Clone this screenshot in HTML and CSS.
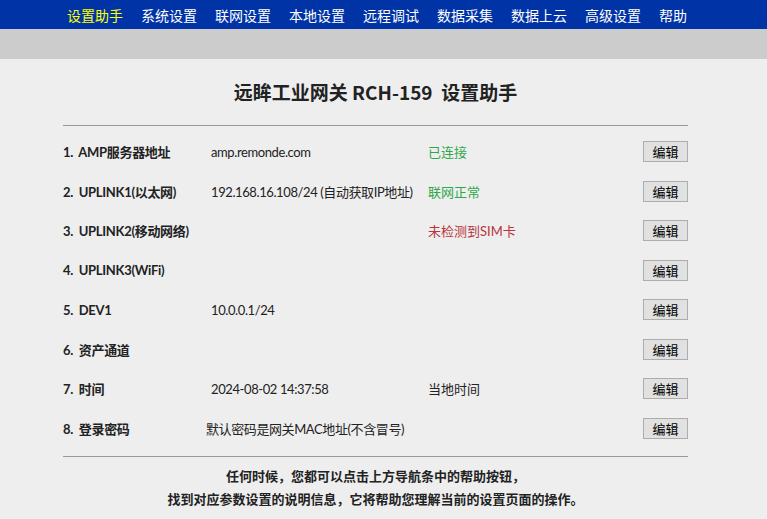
FILE: index.html
```html
<!DOCTYPE html>
<html lang="zh-CN">
<head>
    <meta charset="UTF-8">
    <title>设置助手</title>
    <link rel="stylesheet" href="styles.css">
</head>
<body>
    <div class="nav">
        <a class="nav-item active">设置助手</a>
        <a class="nav-item">系统设置</a>
        <a class="nav-item">联网设置</a>
        <a class="nav-item">本地设置</a>
        <a class="nav-item">远程调试</a>
        <a class="nav-item">数据采集</a>
        <a class="nav-item">数据上云</a>
        <a class="nav-item">高级设置</a>
        <a class="nav-item">帮助</a>
    </div>
    <div class="sub-bar"></div>

    <div class="content">
        <h1 class="title">远眸工业网关 RCH-159&nbsp; 设置助手</h1>
        <hr class="line">
        <table class="wizard-table">
            <tr>
                <td class="col-name">1.&nbsp; AMP服务器地址</td>
                <td class="col-value">amp.remonde.com</td>
                <td class="col-state ok">已连接</td>
                <td class="col-btn"><button class="button-edit">编辑</button></td>
            </tr>
            <tr>
                <td class="col-name">2.&nbsp; UPLINK1(以太网)</td>
                <td class="col-value">192.168.16.108/24 (自动获取IP地址)</td>
                <td class="col-state ok">联网正常</td>
                <td class="col-btn"><button class="button-edit">编辑</button></td>
            </tr>
            <tr>
                <td class="col-name">3.&nbsp; UPLINK2(移动网络)</td>
                <td class="col-value"></td>
                <td class="col-state err">未检测到SIM卡</td>
                <td class="col-btn"><button class="button-edit">编辑</button></td>
            </tr>
            <tr>
                <td class="col-name">4.&nbsp; UPLINK3(WiFi)</td>
                <td class="col-value"></td>
                <td class="col-state"></td>
                <td class="col-btn"><button class="button-edit">编辑</button></td>
            </tr>
            <tr>
                <td class="col-name">5.&nbsp; DEV1</td>
                <td class="col-value">10.0.0.1/24</td>
                <td class="col-state"></td>
                <td class="col-btn"><button class="button-edit">编辑</button></td>
            </tr>
            <tr>
                <td class="col-name">6.&nbsp; 资产通道</td>
                <td class="col-value"></td>
                <td class="col-state"></td>
                <td class="col-btn"><button class="button-edit">编辑</button></td>
            </tr>
            <tr>
                <td class="col-name">7.&nbsp; 时间</td>
                <td class="col-value">2024-08-02 14:37:58</td>
                <td class="col-state">当地时间</td>
                <td class="col-btn"><button class="button-edit">编辑</button></td>
            </tr>
            <tr>
                <td class="col-name">8.&nbsp; 登录密码</td>
                <td class="col-value shift" colspan="2">默认密码是网关MAC地址(不含冒号)</td>
                <td class="col-btn"><button class="button-edit">编辑</button></td>
            </tr>
        </table>
        <hr class="line">
        <div class="tips">
            <p>任何时候，您都可以点击上方导航条中的帮助按钮，</p>
            <p>找到对应参数设置的说明信息，它将帮助您理解当前的设置页面的操作。</p>
        </div>
    </div>
</body>
</html>
```

FILE: styles.css
```css
body {
    margin: 0;
    background-color: #eeeeee;
    font-family: "Noto Sans CJK SC", sans-serif;
    font-size: 13px;
    color: #222222;
}

.nav {
    height: 29px;
    background-color: #0033a6;
    display: flex;
    align-items: center;
    padding-left: 58px;
}
.nav-item {
    color: #ffffff;
    font-size: 14px;
    padding: 0 9px;
    white-space: nowrap;
    cursor: pointer;
}
.nav-item.active {
    color: #ffff00;
}
.sub-bar {
    height: 30px;
    background-color: #cccccc;
}

.content {
    width: 625px;
    margin-left: 63px;
}
.title {
    margin: 0;
    padding-top: 19px;
    height: 47px;
    line-height: 27px;
    text-align: center;
    font-size: 19px;
    font-weight: bold;
    color: #222222;
}
.line {
    margin: 0;
    border: none;
    border-top: 1px solid #999999;
}

.wizard-table {
    width: 100%;
    border-collapse: collapse;
    margin: 6px 0 8px 0;
    font-family: Lato, "Noto Sans CJK SC", sans-serif;
}
.wizard-table td {
    height: 39.5px;
    padding: 0;
    white-space: nowrap;
}
.col-name {
    width: 148px;
    font-weight: bold;
    letter-spacing: -0.3px;
}
.col-value {
    width: 217px;
    letter-spacing: -0.4px;
}
.col-value.shift {
    position: relative;
    left: -5px;
}
.col-state {
    width: 215px;
}
.col-state.ok {
    color: #2ea84a;
}
.col-state.err {
    color: #b8343c;
}
.col-btn {
    width: 45px;
    text-align: right;
}
.button-edit {
    width: 45px;
    height: 21px;
    padding: 0;
    background-color: #e1e1e1;
    border: 1px solid #adadad;
    font-family: "Noto Sans CJK SC", sans-serif;
    font-size: 13px;
    color: #000000;
    vertical-align: middle;
}

.tips {
    padding-top: 7px;
    text-align: center;
    font-weight: bold;
}
.tips p {
    margin: 0;
    line-height: 23px;
}
```
